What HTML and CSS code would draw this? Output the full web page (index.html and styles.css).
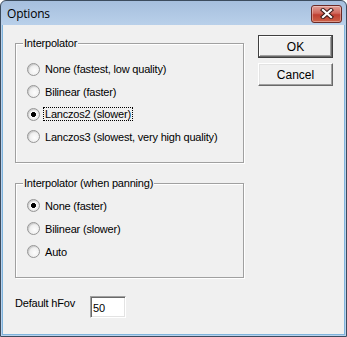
FILE: index.html
```html
<!DOCTYPE html>
<html lang="en">
<head>
    <meta charset="UTF-8">
    <title>Options</title>
    <link rel="stylesheet" href="styles.css">
</head>
<body>
    <div class="window">
        <div class="titlebar">
            <span class="title">Options</span>
            <button class="close" aria-label="Close">
                <svg width="14" height="11" viewBox="0 0 14 11">
                    <path d="M3 2 L11 9 M11 2 L3 9" stroke="#3a1a18" stroke-width="4.2" stroke-linecap="square"/>
                    <path d="M3 2 L11 9 M11 2 L3 9" stroke="#fff" stroke-width="2.2" stroke-linecap="square"/>
                </svg>
            </button>
        </div>
        <div class="client">
            <div class="left">
                <fieldset class="group group-main">
                    <legend>Interpolator</legend>
                    <label class="option"><input type="radio" name="interp"> <span>None (fastest, low quality)</span></label>
                    <label class="option"><input type="radio" name="interp"> <span>Bilinear (faster)</span></label>
                    <label class="option"><input type="radio" name="interp" checked> <span class="focus">Lanczos2 (slower)</span></label>
                    <label class="option"><input type="radio" name="interp"> <span>Lanczos3 (slowest, very high quality)</span></label>
                </fieldset>
                <fieldset class="group group-pan">
                    <legend>Interpolator (when panning)</legend>
                    <label class="option"><input type="radio" name="pan" checked> <span>None (faster)</span></label>
                    <label class="option"><input type="radio" name="pan"> <span>Bilinear (slower)</span></label>
                    <label class="option"><input type="radio" name="pan"> <span>Auto</span></label>
                </fieldset>
                <div class="field">
                    <label for="hfov">Default hFov</label>
                    <input id="hfov" type="text" value="50">
                </div>
            </div>
            <div class="right">
                <button class="btn default">OK</button>
                <button class="btn">Cancel</button>
            </div>
        </div>
    </div>
</body>
</html>
```

FILE: styles.css
```css
body {
    margin: 0;
    padding: 0;
    background: #fff;
    font-family: "Liberation Sans", Arial, sans-serif;
    font-size: 11px;
    letter-spacing: -0.2px;
    color: #000;
}
.window {
    width: 347px;
    height: 337px;
    box-sizing: border-box;
    border: 1px solid #3c4c5e;
    border-radius: 6px 6px 0 0;
    background: linear-gradient(to bottom, #a6bfde 0, #b9d0ea 24px, #b8d2ee 100%);
    padding: 0 2px 2px 2px;
    display: flex;
    flex-direction: column;
}
.titlebar {
    height: 24px;
    display: flex;
    align-items: center;
    justify-content: space-between;
    padding: 0 2px 0 4px;
}
.title {
    font-family: "Open Sans", "Noto Sans", sans-serif;
    font-size: 12px;
    letter-spacing: -0.2px;
    color: #000;
}
.close {
    width: 31px;
    height: 18px;
    margin-top: 1px;
    padding: 0;
    border: 1px solid #6b2a26;
    border-radius: 3px;
    background: linear-gradient(to bottom, #e0a097 0, #d0685c 45%, #bf3f31 55%, #cd6248 100%);
    box-shadow: inset 0 0 0 1px rgba(255,255,255,0.35);
    display: flex;
    align-items: center;
    justify-content: center;
}
.client {
    flex: 1;
    background: #f0f0f0;
    border: 1px solid #7fb4dc;
    border-top: 0;
    margin: 0 -1px -1px -1px;
    padding: 10px 0 0 12px;
    display: flex;
    gap: 14px;
}
.left {
    width: 229px;
}
.group {
    margin: 2px 0 0 0;
    padding: 0 0 0 11px;
    box-sizing: border-box;
    border: 1px solid #a0a0a0;
    box-shadow: 1px 1px 0 #fff, inset 1px 1px 0 #fff;
    min-inline-size: 0;
}
.group legend {
    margin-left: -4px;
    padding: 0 1px;
    line-height: 13px;
    background: #f0f0f0;
}
.group-main {
    height: 126px;
    padding-top: 8px;
}
.group-main .option {
    height: 22.5px;
}
.group-pan {
    height: 101px;
    margin-top: 14px;
    padding-top: 4px;
}
.group-pan .option {
    height: 23px;
}
.option {
    display: flex;
    align-items: center;
    white-space: nowrap;
}
.option input {
    appearance: none;
    -webkit-appearance: none;
    width: 13px;
    height: 13px;
    margin: 0 5px 0 0;
    box-sizing: border-box;
    border: 1px solid #969696;
    border-radius: 50%;
    background: radial-gradient(circle at 60% 60%, #fdfdfd 0, #eeeeee 55%, #d2d2d2 100%);
    box-shadow: inset 1px 1px 1px rgba(0,0,0,0.12);
}
.option input:checked {
    background: radial-gradient(circle, #000 0, #000 2.2px, #fbfbfb 2.8px, #ececec 60%, #d2d2d2 100%);
}
.focus {
    outline: 1px dotted #000;
    outline-offset: 0;
    padding: 0 1px;
    margin-left: -1px;
    line-height: 12px;
}
.field {
    margin-top: 18px;
    display: flex;
    align-items: flex-start;
}
.field label {
    width: 75px;
    padding-top: 1px;
}
.field input {
    width: 36px;
    height: 22px;
    box-sizing: border-box;
    margin: 0;
    padding: 1px 2px 0;
    font: inherit;
    border: 1px solid;
    border-color: #a0a0a0 #fff #fff #a0a0a0;
    box-shadow: inset 1px 1px 0 #696969, inset -1px -1px 0 #e3e3e3;
    background: #fff;
    outline: none;
}
.right {
    display: flex;
    flex-direction: column;
    gap: 5px;
}
.btn {
    width: 75px;
    height: 23px;
    padding: 0;
    font: inherit;
    font-size: 12px;
    color: #000;
    background: #f0f0f0;
    border: 1px solid;
    border-color: #fff #696969 #696969 #fff;
    box-shadow: inset -1px -1px 0 #a0a0a0, inset 1px 1px 0 #e3e3e3;
}
.btn.default {
    border-color: #404040;
    box-shadow: inset -1px -1px 0 #696969, inset 1px 1px 0 #fff, inset -2px -2px 0 #a0a0a0;
}
```
